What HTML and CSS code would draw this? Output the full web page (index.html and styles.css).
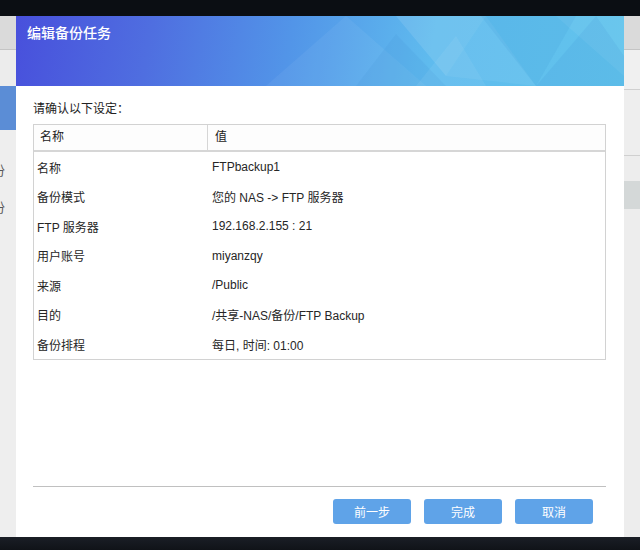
FILE: index.html
```html
<!DOCTYPE html>
<html lang="zh">
<head>
<meta charset="utf-8">
<title>编辑备份任务</title>
<link rel="stylesheet" href="styles.css">
</head>
<body>
<div class="screen">
  <div class="topbar"></div>
  <div class="middle">
    <aside class="strip strip-left">
      <div class="s-head"></div>
      <div class="s-light"></div>
      <div class="s-blue"></div>
      <div class="s-list">
        <span class="s-item">份</span>
        <span class="s-item">份</span>
      </div>
    </aside>
    <section class="dialog">
      <header class="dlg-header">
        <svg class="dlg-pattern" viewBox="0 0 608 70" preserveAspectRatio="none" aria-hidden="true">
          <polygon points="250,70 330,0 410,70" fill="#ffffff" opacity="0.05"/>
          <polygon points="340,70 380,18 430,70" fill="#3f8fd8" opacity="0.14"/>
          <polygon points="380,0 470,0 430,60" fill="#ffffff" opacity="0.10"/>
          <polygon points="430,60 470,0 520,70" fill="#ffffff" opacity="0.06"/>
          <polygon points="465,0 560,0 520,70" fill="#3c96d6" opacity="0.14"/>
          <polygon points="520,70 580,0 608,40 608,70" fill="#2f86cc" opacity="0.12"/>
          <polygon points="540,0 608,0 608,60" fill="#ffffff" opacity="0.05"/>
          <polygon points="400,70 440,20 470,70" fill="#ffffff" opacity="0.06"/>
        </svg>
        <h1 class="dlg-title">编辑备份任务</h1>
      </header>
      <div class="dlg-body">
        <p class="prompt">请确认以下设定：</p>
        <div class="table">
          <div class="thead">
            <div class="th th-name">名称</div>
            <div class="th th-value">值</div>
          </div>
          <div class="tbody">
            <div class="row"><div class="td td-name">名称</div><div class="td td-value">FTPbackup1</div></div>
            <div class="row"><div class="td td-name">备份模式</div><div class="td td-value">您的 NAS -&gt; FTP 服务器</div></div>
            <div class="row"><div class="td td-name">FTP 服务器</div><div class="td td-value">192.168.2.155 : 21</div></div>
            <div class="row"><div class="td td-name">用户账号</div><div class="td td-value">miyanzqy</div></div>
            <div class="row"><div class="td td-name">来源</div><div class="td td-value">/Public</div></div>
            <div class="row"><div class="td td-name">目的</div><div class="td td-value">/共享-NAS/备份/FTP Backup</div></div>
            <div class="row"><div class="td td-name">备份排程</div><div class="td td-value">每日, 时间: 01:00</div></div>
          </div>
        </div>
        <div class="spacer"></div>
        <footer class="dlg-footer">
          <button class="btn">前一步</button>
          <button class="btn">完成</button>
          <button class="btn">取消</button>
        </footer>
      </div>
    </section>
    <aside class="strip strip-right">
      <div class="s-head"></div>
      <div class="r-a"></div>
      <div class="r-b"></div>
      <div class="r-c"></div>
      <div class="r-band"></div>
      <div class="r-rest"></div>
    </aside>
  </div>
  <div class="bottombar"></div>
</div>
</body>
</html>
```

FILE: styles.css
```css
* { box-sizing: border-box; }
html, body { margin: 0; padding: 0; }
body {
  width: 640px;
  height: 550px;
  overflow: hidden;
  background: #0d1016;
  font-family: "Liberation Sans", "Noto Sans CJK SC", sans-serif;
  font-size: 12px;
  color: #262626;
}
.screen {
  display: grid;
  grid-template-rows: 16px 521px 13px;
  height: 550px;
}
.topbar { background: #0b0e13; }
.bottombar { background: linear-gradient(#1a1e26, #101318); }
.middle {
  display: grid;
  grid-template-columns: 16px 608px 16px;
  min-height: 0;
}
.strip {
  display: flex;
  flex-direction: column;
  overflow: hidden;
  background: #ededed;
}
.s-head {
  height: 34px;
  flex: none;
  background: #dadada;
  border-bottom: 1px solid #c4c4c4;
}
.s-light { height: 36px; flex: none; background: #ececec; }
.s-blue { height: 44px; flex: none; background: #5b8dd6; }
.s-list {
  flex: 1;
  display: flex;
  flex-direction: column;
  padding-top: 33px;
  gap: 21px;
  background: #eeeeee;
}
.s-item {
  margin-left: -8px;
  font-size: 13px;
  line-height: 16px;
  color: #555;
  white-space: nowrap;
}
.strip-left { box-shadow: inset -5px 0 6px -3px rgba(0,0,0,0.25); }
.strip-right { box-shadow: inset 5px 0 6px -3px rgba(0,0,0,0.25); }
.r-a { height: 40px; flex: none; background: #f0f0f0; border-bottom: 1px solid #d0d0d0; }
.r-b { height: 66px; flex: none; background: #eeeeee; border-bottom: 1px solid #d0d0d0; }
.r-c { height: 25px; flex: none; background: #ededed; }
.r-band { height: 28px; flex: none; background: #d4d8d8; }
.r-rest { flex: 1; background: #ededed; }

.dialog {
  background: #ffffff;
  display: flex;
  flex-direction: column;
  min-height: 0;
}
.dlg-header {
  position: relative;
  height: 70px;
  flex: none;
  overflow: hidden;
  background: linear-gradient(100deg, #4850dc 0%, #4f6ee0 22%, #5295e8 45%, #5fbbee 68%, #62c4ec 100%);
}
.dlg-pattern {
  position: absolute;
  left: 0;
  top: 0;
  width: 100%;
  height: 100%;
}
.dlg-title {
  position: relative;
  margin: 0;
  padding: 9px 0 0 11px;
  font-size: 14px;
  line-height: 16px;
  font-weight: 500;
  color: #ffffff;
}
.dlg-body {
  flex: 1;
  display: flex;
  flex-direction: column;
  padding: 15px 18px 0 17px;
}
.prompt {
  margin: 0 0 7px;
  line-height: 16px;
  font-size: 12px;
  color: #222;
}
.table {
  border: 1px solid #d2d2d2;
}
.thead {
  display: grid;
  grid-template-columns: 173px 1fr;
  height: 27px;
  border-bottom: 2px solid #d6d6d6;
  background: #fdfdfd;
}
.th {
  line-height: 25px;
  padding-left: 6px;
  color: #222;
}
.th-value {
  border-left: 1px solid #d6d6d6;
  padding-left: 7px;
}
.row {
  display: grid;
  grid-template-columns: 174px 1fr;
  height: 29.5px;
  align-items: center;
  padding-top: 1px;
}
.td-name { padding-left: 3px; }
.td-value { padding-left: 4px; }

.spacer { flex: 1; }
.dlg-footer {
  display: flex;
  justify-content: flex-end;
  gap: 13px;
  border-top: 1px solid #c0c0c0;
  padding: 12px 13px 13px 0;
}
.btn {
  width: 78px;
  height: 25px;
  border: none;
  border-radius: 3px;
  background: #5fa3e8;
  color: #ffffff;
  font-family: "Liberation Sans", "Noto Sans CJK SC", sans-serif;
  font-size: 12px;
  padding: 0;
}
```
